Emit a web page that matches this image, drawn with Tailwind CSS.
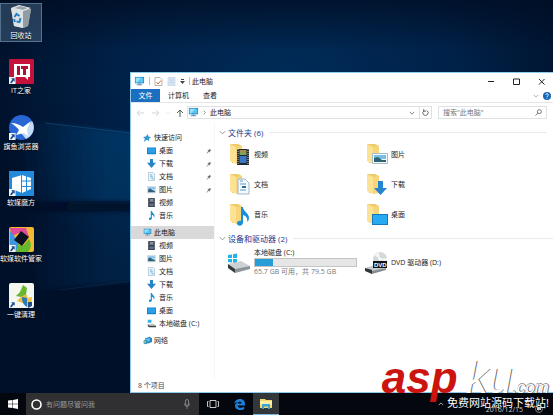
<!DOCTYPE html>
<html lang="zh-CN">

<head>
    <meta charset="UTF-8">
    <meta name="viewport" content="width=device-width, initial-scale=1.0">
    <title>此电脑</title>
    <script src="https://cdn.jsdelivr.net/npm/@tailwindcss/browser@4"></script>
</head>

<body class="relative h-screen overflow-hidden flex flex-col bg-[#00132d] font-['Open_Sans','Noto_Sans_CJK_SC',sans-serif] text-[7px] leading-[13px] text-[#222]">
    <!-- Icon sprites -->
    <svg class="hidden">
        <symbol id="pc" viewBox="0 0 12 12">
            <path fill="#2a8fd0" d="M1 1h10v7H1z" /><path fill="#5cc4f3" d="M2 2h8v5H2z" /><path fill="#9be0fb" d="M2 2h6L3 7H2z" /><path fill="#6694b4" d="M5 8h2v1h2v1H3V9h2z" />
        </symbol>
        <symbol id="desktop" viewBox="0 0 12 12">
            <path fill="#1683cd" d="M0 2h12v9H0z" /><path fill="#2b9fe8" d="M1 3h10v6H1z" />
        </symbol>
        <symbol id="download" viewBox="0 0 12 12">
            <path fill="#2684c9" d="M4 0h4v5h4l-6 7-6-7h4z" />
        </symbol>
        <symbol id="document" viewBox="0 0 12 12">
            <path fill="#eaf4fb" stroke="#8fb4cc" stroke-width=".8" d="M2 .5h6l2 2v9H2z" /><path stroke="#5a9bc6" d="M4 4h3M4 6.500h4M6 9h3" />
        </symbol>
        <symbol id="picture" viewBox="0 0 12 12">
            <path fill="#e8f2f8" stroke="#a5bccb" stroke-width=".6" d="M.5 2h11v8.500H.5z" /><path fill="#7fbbe2" d="M1.500 3h9v3h-9z" /><path fill="#2c5f7d" d="M1.500 6l3-1 3 2 3 .5V9.500h-9z" />
        </symbol>
        <symbol id="video" viewBox="0 0 12 12">
            <path fill="#34393f" d="M1.500 0h9v12h-9z" /><path fill="#7c93a8" d="M4 1h4.500v4H4z" /><path fill="#58718b" d="M4 7h4.500v4H4z" /><path stroke="#c9ced4" stroke-dasharray="1 1" d="M2.700 0v12M9.500 0v12" stroke-width=".8" />
        </symbol>
        <symbol id="music" viewBox="0 0 12 12">
            <path fill="#1b8fd4" d="M5 0h1.500c.3 2.500 4 3.500 3.500 7-.2 1-.6 1.700-1 2 .5-2.500-1-3.500-2.500-4v5c-.2 2.500-4 2.700-4 .6 0-1.300 1.200-2 2.500-1.700z" />
        </symbol>
        <symbol id="star" viewBox="0 0 12 12">
            <path fill="#2f95d6" d="M7 0l1.200 3.800L12 5 8.800 7l.4 4L6 8.500 1 12l2-5L0 4.500l4.500-.7z" />
        </symbol>
        <symbol id="disk" viewBox="0 0 12 12">
            <path fill="#35b3ee" d="M1 1h5v4H1z" /><path fill="#c5cacd" d="M1 7l8-1 3 3-9 1z" /><path fill="#3b4248" d="M1 7l2 2h9v2H3L1 9.500z" />
        </symbol>
        <symbol id="network" viewBox="0 0 12 12">
            <path fill="#2687c8" d="M3 3l6-2 3 2v5l-5 2-4-2z" /><path fill="#67c2ef" d="M4 4l5-1.500v4L4 8z" /><circle cx="3.500" cy="8" r="3" fill="#3e91bd" /><path fill="#8fd48d" d="M2 6l2 1-1 3-1.500-1z" />
        </symbol>
        <symbol id="pin" viewBox="0 0 8 8">
            <path fill="#6d747b" d="M5 1l2 2-.8.3-1 1.400L5 6.200 3.700 5 1 7.500.6 7.200 3 4.300 1.800 3l1.500-.2L4.800 1.800z" />
        </symbol>
        <symbol id="chevron" viewBox="0 0 8 8">
            <path fill="none" stroke="currentColor" d="M1 2.500l3 3 3-3" />
        </symbol>
        <symbol id="folder" viewBox="0 0 24 24">
            <path fill="#efcb6a" d="M3 2h8l4 2v17H5z" /><path fill="#fbe295" d="M3 2l6 3v17l-6-3z" /><path fill="#f7d67b" d="M9 5l6-1v17l-6 1z" />
        </symbol>
        <symbol id="shortcut" viewBox="0 0 8 8">
            <path fill="#f5f8fb" d="M0 0h7.500v8H0z" /><path fill="#1e4d94" d="M2.500 1.500h4v4L5.300 4.300 3 7H1.500C1.500 5 2.500 4 3.800 3z" />
        </symbol>
    </svg>

    <!-- Wallpaper -->
    <svg class="absolute inset-0 size-full" viewBox="0 0 553 415" preserveAspectRatio="none" aria-hidden="true">
        <defs>
            <radialGradient id="glow" gradientUnits="userSpaceOnUse" cx="290" cy="90" r="310" gradientTransform="matrix(1 0 0 .7 0 20)">
                <stop offset="0" stop-color="#002c58" /><stop offset=".55" stop-color="#002148" /><stop offset="1" stop-color="#001029" />
            </radialGradient>
            <linearGradient id="beam"><stop offset="0" stop-color="#004078" stop-opacity="0" /><stop offset=".7" stop-color="#004074" stop-opacity=".6" /></linearGradient>
            <linearGradient id="shade"><stop offset="0" stop-color="#000f25" stop-opacity="0" /><stop offset=".6" stop-color="#000f25" stop-opacity=".8" /></linearGradient>
            <linearGradient id="top" x2="0" y2="1"><stop offset="0" stop-color="#000d22" stop-opacity=".7" /><stop offset="1" stop-color="#000d22" stop-opacity="0" /></linearGradient>
            <filter id="soft"><feGaussianBlur stdDeviation="2" /></filter>
        </defs>
        <path fill="url(#glow)" d="M0 0h553v415H0z" />
        <path fill="url(#top)" d="M0 0h553v50H0z" />
        <path fill="url(#beam)" d="M20 120l125 14v67H30z" filter="url(#soft)" />
        <path fill="url(#beam)" d="M20 213h125v67L40 290z" filter="url(#soft)" opacity=".6" />
        <path fill="url(#shade)" d="M30 202h115v8H30z" filter="url(#soft)" />
        <path stroke="#2a7ab0" stroke-opacity=".3" d="M45 123l85 10" />
        <path stroke="#2a7ab0" stroke-opacity=".15" d="M60 290l70-9" />
    </svg>

    <!-- Desktop shortcuts -->
    <nav class="relative grow flex flex-col items-start gap-[17px] pt-[3px] text-white text-center leading-[10px] [text-shadow:0_1px_1px_#000]">
        <a href="#" class="w-[42px] h-[39px] flex flex-col items-center gap-[2px] bg-[#5d7f9f]/40 border border-[#7295b0]/60 whitespace-nowrap">
            <svg class="size-[25px] shrink-0" viewBox="0 0 25 25">
                <path fill="#b7bfc5" d="M2 4l20 1-3 17-5 2-9-2z" /><path fill="#dde2e5" d="M2 4l12 3v17l-9-2z" /><path fill="#929ca4" d="M14 7l8-2-3 17-5 2z" /><path fill="#edf1f3" d="M2 4l8-3 12 3-8 3z" /><path fill="#99a2a9" d="M5 4l6-2 8 2-5 2z" />
                <path fill="none" stroke="#2381c4" stroke-width="2" d="M5.500 13l2-3 3 2M11.500 14l-1 4-3-.5M5 15l1 3" />
            </svg>
            回收站
        </a>
        <a href="#" class="w-[42px] h-[39px] flex flex-col items-center gap-[2px] whitespace-nowrap">
            <svg class="size-[25px] shrink-0" viewBox="0 0 25 25">
                <rect width="25" height="25" rx="1" fill="#c4123b" /><path fill="#fff" d="M5 5h16v13h-2v3l-3-3H5z" /><path fill="#b01034" d="M8 7h3v9H8zM12 7h7v3h-2v6h-3v-6h-2z" /><use href="#shortcut" y="18" width="7" height="7" />
            </svg>
            IT之家
        </a>
        <a href="#" class="w-[42px] h-[39px] flex flex-col items-center gap-[2px] whitespace-nowrap">
            <svg class="size-[25px] shrink-0" viewBox="0 0 25 25">
                <circle cx="12.500" cy="12.500" r="12.500" fill="#2865d5" /><path fill="#c3dbf5" d="M23 6c4 7 1 15-6 18l-5-6z" /><path fill="#fff" d="M2 8c5 0 9 2 12 4l8-6-4 8 1 7-4-3-8 2 3-5c-2-3-5-5-8-7z" /><use href="#shortcut" y="18" width="7" height="7" />
            </svg>
            旗鱼浏览器
        </a>
        <a href="#" class="w-[42px] h-[39px] flex flex-col items-center gap-[2px] whitespace-nowrap">
            <svg class="size-[25px] shrink-0" viewBox="0 0 25 25">
                <path fill="#2389db" d="M0 0h25v25H0z" /><path fill="#fff" d="M3 7l10-3 9 3v11l-9 4-10-4z" /><path fill="none" stroke="#2389db" d="M12.500 4v18M17.500 5v16M12.500 10H22M12.500 15.500H22" /><use href="#shortcut" y="18" width="7" height="7" />
            </svg>
            软媒魔方
        </a>
        <a href="#" class="w-[42px] h-[39px] flex flex-col items-center gap-[2px] whitespace-nowrap">
            <svg class="size-[25px] shrink-0" viewBox="0 0 25 25">
                <rect width="25" height="25" rx="2" fill="#f2b832" /><path fill="#e04b9a" d="M1 1h16l3 9-8-5-9 4z" /><path fill="#3d97df" d="M1 4l5 6 5 10-3 5H1z" /><path fill="#63b82c" d="M7 25l2-8 5 2 6-7c3 5 2 10-1 13z" /><path fill="#0b1220" d="M12 4l8 6-7 9-8-6z" /><use href="#shortcut" y="18" width="7" height="7" />
            </svg>
            软媒软件管家
        </a>
        <a href="#" class="w-[42px] h-[39px] flex flex-col items-center gap-[2px] whitespace-nowrap">
            <svg class="size-[25px] shrink-0" viewBox="0 0 25 25">
                <rect width="25" height="25" rx="2" fill="#f5f6ef" /><path fill="#67b82f" d="M14 2l4 3-1 7-5 2-5-1 4-4z" /><path fill="#e9bf38" d="M13 13l5-1 2 10-12-4z" /><path fill="#2b78bd" d="M13 14l5 1v9c-3-2-5-4-5-10z" /><path fill="#f3c33d" d="M18 15l5-1c0 5-1 8-5 10z" /><path fill="#214e83" d="M19 19h4v4l-4 2z" /><use href="#shortcut" y="18" width="7" height="7" />
            </svg>
            一键清理
        </a>
    </nav>

    <!-- Explorer window -->
    <main class="absolute left-[130px] right-0 top-[72px] bottom-[22px] flex flex-col bg-white border-l border-y border-[#8ecbea]">
        <header class="h-4 flex items-center pl-[3px] shrink-0">
            <svg class="size-[11px]"><use href="#pc" /></svg>
            <span class="w-px h-2 bg-[#bbb] mx-1"></span>
            <svg class="size-[9px]" viewBox="0 0 9 9"><path fill="#fff" stroke="#a9a39b" stroke-width=".8" d="M1 .5h5l2 2v6H1z" /><path fill="none" stroke="#d36b3b" d="M2.500 5l1.500 2 3-3.500" /></svg>
            <svg class="size-[9px] ml-1" viewBox="0 0 9 9"><path fill="#d8e5f2" stroke="#b9cde0" stroke-width=".6" d="M1 .5h7v8H1z" /><path stroke="#a9c2da" d="M2.500 3h4M2.500 5.500h4" stroke-width=".6" /></svg>
            <svg class="size-[5px] ml-1" viewBox="0 0 5 5"><path fill="#444" d="M1 0h3v1H1zM0 2h5L2.500 5z" /></svg>
            <span class="w-px h-2 bg-[#bbb] ml-1 mr-[2px]"></span>
            <h1>此电脑</h1>
            <div class="ml-auto flex items-center gap-[18px] pr-2 text-[#222]">
                <button aria-label="最小化"><svg class="size-[7px]" viewBox="0 0 7 7"><path stroke="currentColor" d="M0 3.500h6" /></svg></button>
                <button aria-label="最大化"><svg class="size-[7px]" viewBox="0 0 7 7"><path fill="none" stroke="currentColor" d="M.5 1h6v5.500h-6z" /></svg></button>
                <button aria-label="关闭"><svg class="size-[7px]" viewBox="0 0 7 7"><path stroke="currentColor" d="M1 1l5.500 5.500M6.500 1L1 6.500" /></svg></button>
            </div>
        </header>
        <div class="h-[14px] flex items-stretch border-b border-[#e3e5e7] shrink-0">
            <button class="w-[29px] bg-[#1a6fc0] text-white">文件</button>
            <button class="ml-2">计算机</button>
            <button class="ml-[14px]">查看</button>
            <button class="ml-auto text-[#999]" aria-label="展开功能区"><svg class="size-[6px]"><use href="#chevron" /></svg></button>
            <button class="mx-[2px] ml-1" aria-label="帮助">
                <svg class="size-2" viewBox="0 0 8 8"><circle cx="4" cy="4" r="4" fill="#1667b5" /><path fill="none" stroke="#fff" stroke-width=".9" d="M2.700 3c0-2 2.800-1.600 2.600 0C5.200 4 4 3.900 4 5M4 5.700v.9" /></svg>
            </button>
        </div>
        <div class="h-[19px] flex items-center pl-[5px] pr-[6px] shrink-0">
            <button class="text-[#d2d5d8]" aria-label="后退"><svg class="size-2" viewBox="0 0 8 8"><path fill="none" stroke="currentColor" d="M8 4H1M4 1L1 4l3 3" /></svg></button>
            <button class="ml-2 text-[#d2d5d8]" aria-label="前进"><svg class="size-2" viewBox="0 0 8 8"><path fill="none" stroke="currentColor" d="M0 4h7M4 1l3 3-3 3" /></svg></button>
            <svg class="size-1 ml-[6px] text-[#ccc]"><use href="#chevron" /></svg>
            <button class="ml-[6px] text-[#555]" aria-label="上移"><svg class="size-2" viewBox="0 0 8 8"><path fill="none" stroke="currentColor" d="M4 8V1M1 4l3-3 3 3" /></svg></button>
            <div class="h-[13px] ml-[3px] grow flex items-center border border-[#dfe1e3] leading-[11px]">
                <svg class="size-[11px]"><use href="#pc" /></svg>
                <svg class="size-[5px] mx-[3px] -rotate-90 text-[#555]"><use href="#chevron" /></svg>
                <span>此电脑</span>
                <button class="ml-auto px-1 text-[#555]" aria-label="历史记录"><svg class="size-[6px]"><use href="#chevron" /></svg></button>
                <button class="px-[2px] border-l border-[#dfe1e3] h-full" aria-label="刷新"><svg class="size-[7px]" viewBox="0 0 8 8"><path fill="none" stroke="#555" d="M5.500 1.800A3 3 0 1 1 2.200 2M2 0v2.500h2.500" /></svg></button>
            </div>
            <div class="w-[109px] h-[13px] ml-[6px] flex items-center border border-[#dfe1e3] px-1">
                <input type="text" aria-label="搜索" placeholder='搜索"此电脑"' class="min-w-0 grow h-[11px] placeholder:text-[#777] outline-none">
                <svg class="size-[7px]" viewBox="0 0 8 8"><circle cx="5" cy="3" r="2.300" fill="none" stroke="#666" /><path stroke="#666" d="M3.300 4.700L.5 7.500" /></svg>
            </div>
        </div>

        <div class="grow min-h-0 flex">
            <!-- Navigation pane -->
            <aside class="w-[84px] shrink-0 pt-[9px] border-r border-[#f5f7f8] whitespace-nowrap">
                <a href="#" class="h-[13px] flex items-center gap-[3px] pl-3"><svg class="size-2"><use href="#star" /></svg>快速访问</a>
                <ul>
                    <li><a href="#" class="h-[13px] flex items-center gap-[3px] pl-4"><svg class="size-[9px]"><use href="#desktop" /></svg>桌面<svg class="size-[6px] ml-auto mr-[2px]"><use href="#pin" /></svg></a></li>
                    <li><a href="#" class="h-[13px] flex items-center gap-[3px] pl-4"><svg class="size-[9px]"><use href="#download" /></svg>下载<svg class="size-[6px] ml-auto mr-[2px]"><use href="#pin" /></svg></a></li>
                    <li><a href="#" class="h-[13px] flex items-center gap-[3px] pl-4"><svg class="size-[9px]"><use href="#document" /></svg>文档<svg class="size-[6px] ml-auto mr-[2px]"><use href="#pin" /></svg></a></li>
                    <li><a href="#" class="h-[13px] flex items-center gap-[3px] pl-4"><svg class="size-[9px]"><use href="#picture" /></svg>图片<svg class="size-[6px] ml-auto mr-[2px]"><use href="#pin" /></svg></a></li>
                    <li><a href="#" class="h-[13px] flex items-center gap-[3px] pl-4"><svg class="size-[9px]"><use href="#video" /></svg>视频</a></li>
                    <li><a href="#" class="h-[13px] flex items-center gap-[3px] pl-4"><svg class="size-[9px]"><use href="#music" /></svg>音乐</a></li>
                </ul>
                <a href="#" class="h-[13px] mt-1 flex items-center gap-[2px] pl-3 bg-[#d9d9d9]"><svg class="size-[9px]"><use href="#pc" /></svg>此电脑</a>
                <ul>
                    <li><a href="#" class="h-[13px] flex items-center gap-[3px] pl-4"><svg class="size-[9px]"><use href="#video" /></svg>视频</a></li>
                    <li><a href="#" class="h-[13px] flex items-center gap-[3px] pl-4"><svg class="size-[9px]"><use href="#picture" /></svg>图片</a></li>
                    <li><a href="#" class="h-[13px] flex items-center gap-[3px] pl-4"><svg class="size-[9px]"><use href="#document" /></svg>文档</a></li>
                    <li><a href="#" class="h-[13px] flex items-center gap-[3px] pl-4"><svg class="size-[9px]"><use href="#download" /></svg>下载</a></li>
                    <li><a href="#" class="h-[13px] flex items-center gap-[3px] pl-4"><svg class="size-[9px]"><use href="#music" /></svg>音乐</a></li>
                    <li><a href="#" class="h-[13px] flex items-center gap-[3px] pl-4"><svg class="size-[9px]"><use href="#desktop" /></svg>桌面</a></li>
                    <li><a href="#" class="h-[13px] flex items-center gap-[3px] pl-4"><svg class="size-[9px]"><use href="#disk" /></svg>本地磁盘 (C:)</a></li>
                </ul>
                <a href="#" class="h-[13px] mt-1 flex items-center gap-[2px] pl-3"><svg class="size-[9px]"><use href="#network" /></svg>网络</a>
            </aside>

            <!-- Contents -->
            <section class="grow min-w-0 pt-1 pl-1">
                <h2 class="h-3 flex items-center gap-[2px] text-[8px] text-[#26368c] pr-[6px]">
                    <svg class="size-[7px] text-[#888]"><use href="#chevron" /></svg>文件夹 (6)<span class="grow h-px ml-1 bg-[#e8eaee]"></span>
                </h2>
                <div class="grid grid-cols-[repeat(auto-fill,137px)] auto-rows-[30px] pl-2 pt-px">
                    <a href="#" class="flex items-center gap-[3px]">
                        <svg class="size-6" viewBox="0 0 24 24"><use href="#folder" /><path fill="#23282e" d="M10 7h12v16H10z" /><path fill="#a78f4d" d="M12.500 8h7v5h-7z" /><path fill="#3a78c4" d="M12.500 14h7v7h-7z" /><path fill="#75a858" d="M13 11l6-1v3h-6z" /><path stroke="#c2c7cd" stroke-dasharray="1 1" d="M11 7v16M21 7v16" /></svg>视频
                    </a>
                    <a href="#" class="flex items-center gap-[3px]">
                        <svg class="size-6" viewBox="0 0 24 24"><use href="#folder" /><path fill="#f7fafb" stroke="#a7bac5" d="M8.500 11.500h15v10h-15z" /><path fill="#77bee9" d="M10 13h12v4H10z" /><path fill="#2c6470" d="M10 16l4-1 4 3h4v2H10z" /></svg>图片
                    </a>
                    <a href="#" class="flex items-center gap-[3px]">
                        <svg class="size-6" viewBox="0 0 24 24"><use href="#folder" /><path fill="#f4f9fd" stroke="#9fb6c6" d="M11 7h7l4 4v11H11z" /><path fill="none" stroke="#5f9dc7" d="M13 12h6M13 9h3M13 18h6" /><path fill="#2d6b9d" d="M15 14h4v2h-4z" /></svg>文档
                    </a>
                    <a href="#" class="flex items-center gap-[3px]">
                        <svg class="size-6" viewBox="0 0 24 24"><use href="#folder" /><path fill="#2384d0" d="M14 9h5v7h4l-6.500 7-6.500-7h4z" /></svg>下载
                    </a>
                    <a href="#" class="flex items-center gap-[3px]">
                        <svg class="size-6" viewBox="0 0 24 24"><use href="#folder" /><path fill="#178fda" d="M14 5h2c0 4 6 6 6 11 0 2-1 3-2 4 1-4-1-6-4-7v8c-1 4-6 3-6 .5 0-2 2-3 4-2.500z" /></svg>音乐
                    </a>
                    <a href="#" class="flex items-center gap-[3px]">
                        <svg class="size-6" viewBox="0 0 24 24"><use href="#folder" /><path fill="#1478bd" d="M8 12h16v11H8z" /><path fill="#27aaf0" d="M9 13h14v9H9z" /></svg>桌面
                    </a>
                </div>
                <h2 class="h-3 mt-[3px] flex items-center gap-[2px] text-[8px] text-[#26368c]">
                    <svg class="size-[7px] text-[#888]"><use href="#chevron" /></svg>设备和驱动器 (2)<span class="grow h-px ml-1 bg-[#e8eaee]"></span>
                </h2>
                <div class="grid grid-cols-[repeat(auto-fill,137px)] pl-2 pt-1">
                    <a href="#" class="flex items-center gap-[3px]">
                        <svg class="size-6 shrink-0" viewBox="0 0 24 24"><path fill="#23b4ec" d="M1 4l4-.6V7H1zM6 3.200L10 2.600V7H6zM1 8h4v3.600L1 11zM6 8h4v4.400l-4-.6z" /><path fill="#cdd1d3" d="M1 13l13-3 9 5-15 4z" /><path fill="#343a3e" d="M1 13l7 5v4l-7-5z" /><path fill="#8d9599" d="M8 18l15-3v3L8 22z" /></svg>
                        <div class="w-[103px] shrink-0 flex flex-col whitespace-nowrap">
                            <span class="leading-[10px]">本地磁盘 (C:)</span>
                            <div class="h-[9px] bg-[#e6e6e6] border border-[#c4c4c4]"><div class="h-full bg-[#269dd6]" style="width: 17.400%"></div></div>
                            <span class="leading-[10px] text-[#777]">65.7 GB 可用，共 79.5 GB</span>
                        </div>
                    </a>
                    <a href="#" class="flex items-center gap-[3px]">
                        <svg class="size-6 shrink-0" viewBox="0 0 24 24"><circle cx="16" cy="8" r="7" fill="#d4d8db" /><path fill="#f3f5f6" d="M16 8l-6-4 5-3zM16 8l6 4 1-5z" /><circle cx="16" cy="8" r="1.500" fill="#fff" /><path fill="#c4c9cc" d="M1 17l10-3 10 4-13 3z" /><path fill="#303538" d="M1 17l7 2v4l-7-3z" /><path fill="#858c90" d="M8 20l14-3v2L8 23z" /><path fill="#101214" d="M9 10h14v7H9z" /><text x="10" y="16" font-size="6" font-weight="700" fill="#fff" font-family="Liberation Sans">DVD</text></svg>
                        DVD 驱动器 (D:)
                    </a>
                </div>
            </section>
        </div>
        <footer class="h-[13px] pl-[7px] text-[#3c4a63] shrink-0">8 个项目</footer>
    </main>

    <!-- Taskbar -->
    <footer class="relative h-[22px] flex items-stretch bg-[#04070d] shrink-0">
        <button class="w-[26px] flex items-center justify-center" aria-label="开始">
            <svg class="size-[10px]" viewBox="0 0 10 10"><path fill="#fff" d="M0 1.500L4.500 1v3.700H0zM5 .9L10 0v4.700H5zM0 5.300h4.500V9L0 8.500zM5 5.300h5V10l-5-.9z" /></svg>
        </button>
        <label class="w-[173px] flex items-center gap-1 px-[5px] bg-[#303032]">
            <svg class="size-[11px] shrink-0" viewBox="0 0 11 11"><circle cx="5.500" cy="5.500" r="4.500" fill="none" stroke="#fff" stroke-width="1.600" /></svg>
            <input type="text" aria-label="搜索 Windows" placeholder="有问题尽管问我" class="min-w-0 grow placeholder:text-[#999] outline-none">
            <svg class="w-[6px] h-[10px] mr-1 shrink-0" viewBox="0 0 6 10"><rect x="1.500" y=".5" width="3" height="6" rx="1.500" fill="none" stroke="#999" stroke-width=".8" /><path fill="none" stroke="#999" stroke-width=".7" d="M.5 4.500c0 4 5 4 5 0M3 7.500V10" /></svg>
        </label>
        <button class="w-[27px] flex items-center justify-center" aria-label="任务视图">
            <svg class="w-3 h-2" viewBox="0 0 12 8"><path fill="none" stroke="#ddd" stroke-width=".9" d="M3 .5h6v7H3zM1.500 1.500h-1v5h1M10.500 1.500h1v5h-1" /></svg>
        </button>
        <button class="w-[27px] flex items-center justify-center" aria-label="Edge">
            <svg class="size-[11px]" viewBox="0 0 11 11"><path fill="#1b7fdc" d="M0 5C1-1.500 11-2 11 5v1.500H3.500c.2 2.500 4 3 6.700 1.300v2.400C6 12 .8 11 1 6.500 1.200 4.500 2.500 3.500 4 3 2.500 3 1 3.500 0 5zm3.700-.5h4C7.600 2 4 2 3.700 4.500z" /></svg>
        </button>
        <button class="w-[26px] flex items-center justify-center bg-[#34373a] border-b border-[#78b7e2]" aria-label="文件资源管理器">
            <svg class="w-3 h-[11px]" viewBox="0 0 12 11"><path fill="#f4d768" d="M0 1h5l1 1h6v8H0z" /><path fill="#fdf0a6" d="M0 3h12v4H0z" /><path fill="#3aa3d8" d="M2 6h8v5H8V8.500H4V11H2z" /></svg>
        </button>
        <div class="ml-auto flex items-center pr-[10px] text-[#ddd]">
            <button aria-label="显示隐藏的图标"><svg class="size-[6px] rotate-180"><use href="#chevron" /></svg></button>
            <time class="ml-[42px] pt-[10px] text-[#ccc]">2016/12/15</time>
            <button class="ml-3 pt-[10px]" aria-label="通知"><svg class="size-2" viewBox="0 0 8 8"><circle cx="4" cy="4" r="3.500" fill="none" stroke="#aaa" stroke-width=".7" /><path fill="#ccc" d="M2 2h4v3H4L3 6V5H2z" /></svg></button>
        </div>
    </footer>

    <!-- Site stamp over the lower right corner -->
    <div class="absolute right-1 bottom-[5px] flex flex-col items-end whitespace-nowrap">
        <p class="h-9 flex items-baseline font-['Liberation_Sans',sans-serif] italic leading-9 text-white">
            <span class="text-[44px] font-bold text-[#cb1410]">asp</span>
            <span class="text-[44px] ml-2 [text-shadow:1px_0_0_#666]">ku</span>
            <span class="text-[17px] [text-shadow:1px_0_0_#666,0_-1px_0_#999]">.com</span>
        </p>
        <p class="text-[11px] leading-[14px] text-white [text-shadow:0_0_1px_#000]">免费网站源码下载站!</p>
    </div>
</body>

</html>
